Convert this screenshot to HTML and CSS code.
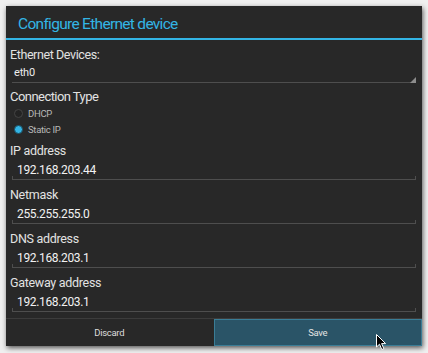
FILE: index.html
```html
<!DOCTYPE html>
<html>
<head>
<meta charset="utf-8">
<link rel="stylesheet" href="styles.css">
</head>
<body>
<div class="dialog">
  <div class="title">Configure Ethernet device</div>
  <div class="content">
    <div class="label">Ethernet Devices:</div>
    <div class="spinner"><span>eth0</span><span class="tri"></span></div>
    <div class="label conn">Connection Type</div>
    <div class="radio"><span class="dot"></span>DHCP</div>
    <div class="radio"><span class="dot on"></span>Static IP</div>
    <div class="group">
      <div class="label">IP address</div>
      <div class="edit">192.168.203.44</div>
    </div>
    <div class="group">
      <div class="label">Netmask</div>
      <div class="edit">255.255.255.0</div>
    </div>
    <div class="group">
      <div class="label">DNS address</div>
      <div class="edit">192.168.203.1</div>
    </div>
    <div class="group">
      <div class="label">Gateway address</div>
      <div class="edit">192.168.203.1</div>
    </div>
  </div>
  <div class="buttons">
    <div class="btn">Discard</div>
    <div class="btn save">Save</div>
  </div>
</div>
<svg class="cursor" width="12" height="18" viewBox="0 0 12 18"><path d="M0.5 0.5 L0.5 13 L3.5 10.2 L5.8 15.5 L7.8 14.6 L5.6 9.6 L9.6 9.6 Z" fill="#000" stroke="#fff" stroke-width="1"/></svg>
</body>
</html>
```
FILE: styles.css
```css
* { box-sizing: border-box; }
html, body { margin: 0; }
body {
  width: 428px;
  height: 353px;
  background: #f0f0f0;
  padding: 6px;
  font-family: Roboto, "Noto Sans", sans-serif;
  position: relative;
  overflow: hidden;
}
.dialog {
  width: 416px;
  height: 340px;
  background: #282828;
  box-shadow: 1px 2px 5px rgba(0,0,0,0.65);
  display: flex;
  flex-direction: column;
}
.title {
  height: 34px;
  padding: 7px 0 0 12px;
  font-size: 15.5px;
  letter-spacing: -0.7px;
  line-height: 22px;
  color: #33b5e5;
  border-bottom: 2px solid #33b5e5;
}
.content {
  flex: 1;
  padding: 6px 6px 0 4px;
  overflow: hidden;
  display: flex;
  flex-direction: column;
}
.label {
  height: 18px;
  line-height: 18px;
  font-size: 12.5px;
  letter-spacing: -0.4px;
  color: #e2e2e2;
}
.spinner {
  height: 19px;
  margin-left: 2px;
  margin-right: 5px;
  border-bottom: 1px solid #4e4e4e;
  display: flex;
  justify-content: space-between;
  align-items: flex-end;
  padding-left: 2px;
  font-size: 11px;
  letter-spacing: -0.2px;
  color: #ececec;
  line-height: 18px;
}
.spinner span:first-child { align-self: flex-start; }
.tri {
  width: 6px;
  height: 6px;
  margin-right: -5px;
  margin-bottom: -1px;
  background: #8c8c8c;
  clip-path: polygon(100% 0, 100% 100%, 0 100%);
}
.conn {
  margin-top: 5px;
  height: 17px;
  line-height: 17px;
  font-size: 13px;
  letter-spacing: -0.55px;
}
.radio {
  height: 16px;
  display: flex;
  align-items: center;
  gap: 5px;
  padding-left: 4px;
  font-size: 9.5px;
  letter-spacing: -0.3px;
  color: #b8b8b8;
}
.dot {
  width: 9px;
  height: 9px;
  border-radius: 50%;
  background: #232323;
  border: 1px solid #444;
}
.dot.on {
  background: #33b5e5;
  border: 1.5px solid #1b4f62;
}
.group {
  height: 44px;
  margin-top: 4px;
}
.group + .group { margin-top: 0; }
.group .label { font-size: 12.5px; letter-spacing: -0.3px; line-height: 19px; }
.edit {
  height: 21px;
  margin-left: 2px;
  padding-top: 2px;
  line-height: 18px;
  padding-left: 5px;
  font-size: 12px;
  letter-spacing: -0.35px;
  color: #f2f2f2;
  border-bottom: 1px solid #4e4e4e;
  background:
    linear-gradient(#4e4e4e, #4e4e4e) left bottom / 1px 3px no-repeat,
    linear-gradient(#4e4e4e, #4e4e4e) right bottom / 1px 3px no-repeat;
}
.buttons {
  height: 28px;
  border-top: 1px solid #3c3c3c;
  display: flex;
}
.btn {
  flex: 1;
  display: flex;
  align-items: center;
  justify-content: center;
  font-size: 9.5px;
  letter-spacing: -0.3px;
  color: #dcdcdc;
}
.save {
  background: #2a5467;
  border: 1px solid #3a7d96;
  margin-left: 1px;
  color: #e4e4e4;
}
.cursor {
  position: absolute;
  left: 376px;
  top: 334px;
}
```
